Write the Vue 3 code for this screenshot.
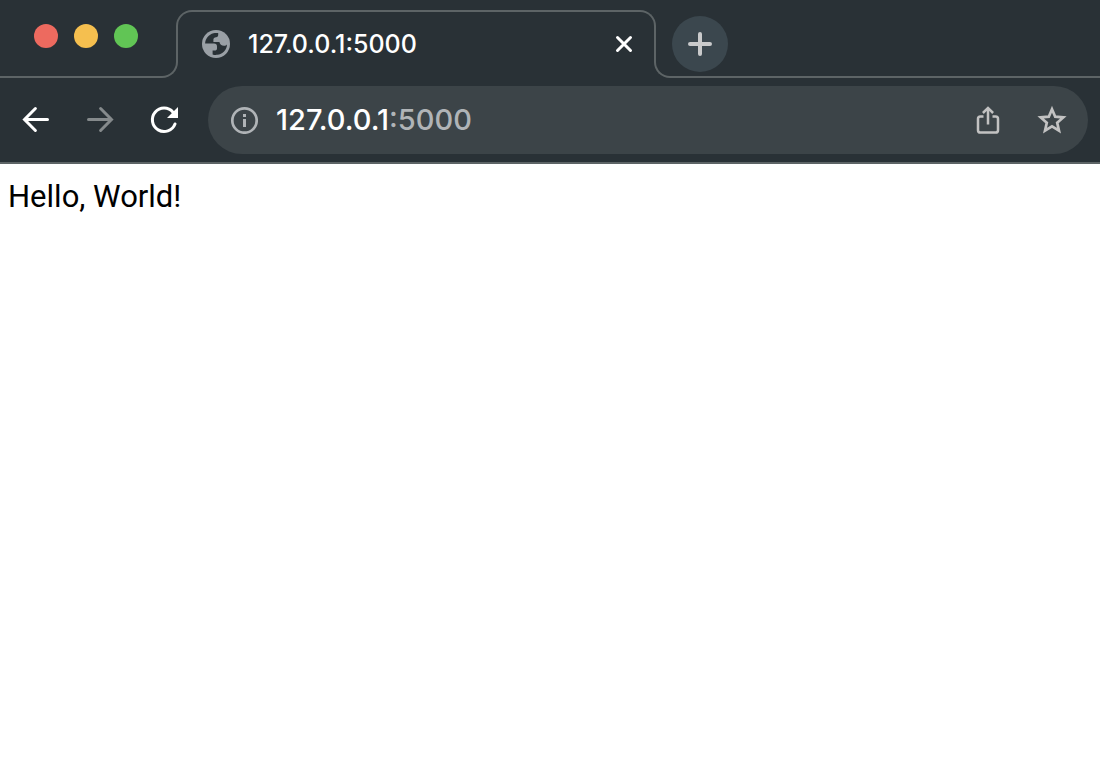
<script setup>
import { ref } from 'vue'

const host = ref('127.0.0.1')
const port = ref(':5000')
</script>

<template>
  <div class="browser">
    <header class="tabstrip">
      <div class="lead">
        <button class="light red" type="button" aria-label="Close window"></button>
        <button class="light yellow" type="button" aria-label="Minimise window"></button>
        <button class="light green" type="button" aria-label="Zoom window"></button>
      </div>
      <div class="tab">
        <svg class="globe" viewBox="0 0 28 28" width="28" height="28" aria-hidden="true">
          <circle cx="14" cy="14" r="14" fill="#9aa0a6" />
          <path d="M16.2 3.1C14.8 2.8 13 2.8 11.5 3.2C6.8 4.4 3.3 8.6 3.1 13.6H12C14 13.6 15 14.8 15 16.6V18.4C15 19.8 14 20.6 12.6 20.6H10.6V24.4C12 24.9 13.6 25 15.2 24.8C20.6 24.2 24.9 19.6 25 14.4C24.4 15.3 23.4 15.8 22 15.8C19.4 15.8 17.8 14.4 17.4 12H11.4V9.6C11.4 8.2 12.4 7.2 14 7.2C15.6 7.2 16.2 6.2 16.2 4.8Z" fill="#293136" />
        </svg>
        <span class="title">{{ host }}{{ port }}</span>
        <button class="close" type="button" aria-label="Close tab">
          <svg viewBox="0 0 20 20" width="20" height="20" aria-hidden="true">
            <path d="M3.5 3.5L16.5 16.5M16.5 3.5L3.5 16.5" stroke="#fff" stroke-width="3" stroke-linecap="round" />
          </svg>
        </button>
      </div>
      <div class="rest">
        <button class="new" type="button" aria-label="New tab">
          <svg viewBox="0 0 24 24" width="24" height="24" aria-hidden="true">
            <path d="M12 2V22M2 12H22" stroke="#c9cacb" stroke-width="4" stroke-linecap="round" />
          </svg>
        </button>
      </div>
    </header>

    <nav class="toolbar">
      <button class="tool" type="button" aria-label="Back">
        <svg viewBox="0 0 32 32" width="32" height="32" aria-hidden="true">
          <path d="M27.5 15.5H4.5M15.4 4.5L4.5 15.5L15.4 26.5" fill="none" stroke="#fff" stroke-width="3" stroke-linecap="round" />
        </svg>
      </button>
      <button class="tool" type="button" aria-label="Forward">
        <svg viewBox="0 0 32 32" width="32" height="32" aria-hidden="true">
          <path d="M4.5 15.5H27.5M16.6 4.5L27.5 15.5L16.6 26.5" fill="none" stroke="#858a8c" stroke-width="3" stroke-linecap="round" />
        </svg>
      </button>
      <button class="tool" type="button" aria-label="Reload">
        <svg viewBox="0 0 32 32" width="32" height="32" aria-hidden="true">
          <path d="M27 20A11.7 11.7 0 1 1 25 8.2" fill="none" stroke="#fff" stroke-width="3" stroke-linecap="round" />
          <path d="M30 3V14H19Z" fill="#fff" />
        </svg>
      </button>
      <div class="omnibox">
        <button class="icon" type="button" aria-label="Site information">
          <svg viewBox="0 0 28 28" width="28" height="28" aria-hidden="true">
            <circle cx="14.5" cy="14.5" r="12.2" fill="none" stroke="#b0b4b7" stroke-width="2.7" />
            <path d="M13 8H16V11H13ZM13 13H16V21H13Z" fill="#b0b4b7" />
          </svg>
        </button>
        <span class="url"><span class="host">{{ host }}</span>{{ port }}</span>
        <button class="icon share" type="button" aria-label="Share">
          <svg viewBox="0 0 32 32" width="32" height="32" aria-hidden="true">
            <path d="M11.5 12.4H8.4Q6 12.4 6 14.8V26.2Q6 28.6 8.4 28.6H23.6Q26 28.6 26 26.2V14.8Q26 12.4 23.6 12.4H20.5M16 20.5V4.5M10.9 9L16 3.9L21.1 9" fill="none" stroke="#c2c2c2" stroke-width="2.5" />
          </svg>
        </button>
        <button class="icon" type="button" aria-label="Bookmark this page">
          <svg viewBox="0 0 32 32" width="32" height="32" aria-hidden="true">
            <path d="M16 5.2L19.2 12.7L27.3 13.4L21.2 18.7L23 26.6L16 22.4L9 26.6L10.8 18.7L4.7 13.4L12.8 12.7Z" fill="none" stroke="#c2c2c2" stroke-width="2.7" />
          </svg>
        </button>
      </div>
    </nav>

    <main class="page">Hello, World!</main>
  </div>
</template>

<style>
body {
  margin: 0;
  background: #fff;
}
</style>

<style scoped>
.browser {
  font-family: Inter, "Liberation Sans", sans-serif;
}

button {
  display: flex;
  align-items: center;
  justify-content: center;
  flex: none;
  padding: 0;
  border: 0;
  background: none;
}

.tabstrip {
  display: flex;
  align-items: flex-end;
  height: 78px;
  background: #293136;
}

.lead,
.rest {
  box-sizing: border-box;
  height: 48px;
  border-bottom: 2px solid #5d6466;
}

.lead {
  display: flex;
  flex: none;
  gap: 16px;
  width: 178px;
  padding-left: 34px;
  border-right: 2px solid #5d6466;
  border-bottom-right-radius: 16px;
}

.light {
  width: 24px;
  height: 24px;
  margin-top: -6px;
  border-radius: 50%;
}

.red {
  background: #ed6a5f;
}

.yellow {
  background: #f5bf4f;
}

.green {
  background: #61c555;
}

.tab {
  box-sizing: border-box;
  display: flex;
  flex: 0 1 480px;
  align-items: center;
  align-self: flex-start;
  height: 50px;
  margin: 10px -2px 0;
  padding: 16px 20px 0 24px;
  border: 2px solid #5d6466;
  border-bottom: 0;
  border-radius: 16px 16px 0 0;
}

.globe {
  flex: none;
}

.title {
  flex: 1;
  margin-left: 18px;
  color: #fff;
  font-size: 25px;
  font-weight: 500;
  line-height: 32px;
}

.rest {
  flex: 1;
  padding-left: 16px;
  border-left: 2px solid #5d6466;
  border-bottom-left-radius: 16px;
}

.new {
  width: 56px;
  height: 56px;
  margin-top: -14px;
  border-radius: 50%;
  background: #3b474e;
}

.toolbar {
  display: flex;
  align-items: center;
  gap: 32px;
  padding: 8px 12px 8px 20px;
  border-bottom: 2px solid #5d6466;
  background: #293136;
}

.omnibox {
  display: flex;
  flex: 1;
  align-items: center;
  height: 68px;
  margin-left: -4px;
  padding: 0 20px 0 22px;
  border-radius: 34px;
  background: #3c4448;
}

.url {
  flex: 1;
  margin-left: 18px;
  color: #b0b4b7;
  font-size: 29px;
  font-weight: 500;
  line-height: 36px;
}

.host {
  color: #fff;
}

.share {
  margin-right: 32px;
}

.page {
  padding: 8px;
  color: #000;
  font-family: Roboto, "Liberation Sans", sans-serif;
  font-size: 31px;
  line-height: 50px;
}
</style>
